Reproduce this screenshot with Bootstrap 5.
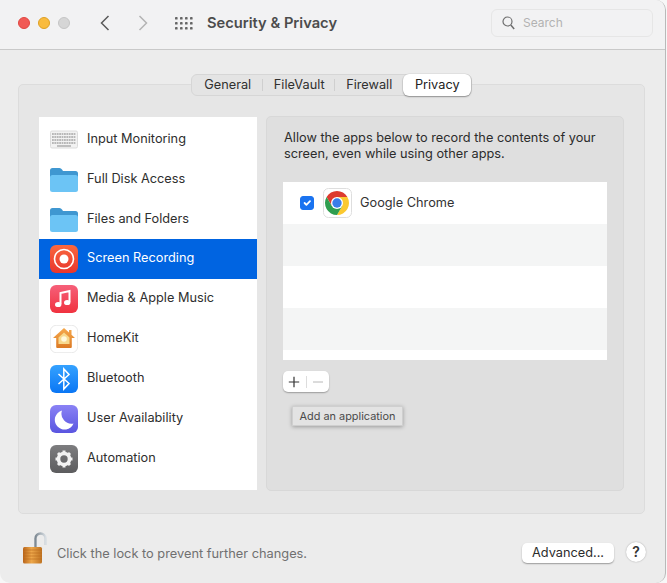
<!DOCTYPE html>
<html lang="en">
<head>
<meta charset="utf-8">
<title>Security &amp; Privacy</title>
<link href="https://cdn.jsdelivr.net/npm/bootstrap@5.3.0/dist/css/bootstrap.min.css" rel="stylesheet">
<style>
html,body{height:100%;background:#f7f7f7;overflow:hidden}
body{font-family:Inter,"Liberation Sans",sans-serif;font-size:12.75px;color:#2e2e2e;margin:0}
.win{width:666px;height:583px;background:#ececec;border-radius:0 10px 10px 10px;border-right:1px solid #b9b9b9;overflow:hidden;display:flex;flex-direction:column}
.tbar{height:50px;flex:none;background:#f2f2f3;border-bottom:1px solid #c9c9c9;padding:0 12px 3px 18px}
.light{width:12px;height:12px;border-radius:50%;display:block}
.lr{background:#f15a55;border:1px solid #e14640}.ly{background:#f9bb3e;border:1px solid #dfa023}.lg{background:#d6d6d6;border:1px solid #c5c5c5}
.lights{gap:8px;width:58px}
.nv1{margin-left:24px}.nv2{margin-left:28px}.nv3{margin-left:27px}
.wt{font-size:14.7px;font-weight:600;color:#4c4c4c;margin-left:14px}
.srch{width:162px;height:28px;border:1px solid #e6e6e6;border-radius:6px;background:#f2f2f3;padding-left:10px;color:#b2b2b2;font-size:12px;gap:8px}
.mainz{flex:1;padding:24px 20px 0 18px;position:relative}
.tabz{position:relative;z-index:2;margin-left:173px;width:281px;height:22px;background:#e4e4e4;border:1px solid #d6d6d6;border-radius:6px;margin-bottom:-12px;flex-wrap:nowrap}
.tabz .nav-link{height:20px;padding:0;font-size:12.75px;color:#303030;display:flex;align-items:center;justify-content:center;position:relative;border:0;background:transparent;border-radius:0}
.tabz .nav-link.t1{width:72px}.tabz .nav-link.t2{width:72px}.tabz .nav-link.t3{width:69px}
.tabz .nav-link.t1::after,.tabz .nav-link.t2::after{content:"";position:absolute;right:0;top:4px;height:12px;width:1px;background:#cfcfcf}
.tabz .nav-link.active{width:68px;height:22px;margin-top:-1px;background:#fff;color:#222;border-radius:6px;box-shadow:0 1px 1.5px rgba(0,0,0,.35),0 0 0 .5px rgba(0,0,0,.08)}
.pane{height:430px;background:#e6e6e6;border:1px solid #dcdcdc;border-radius:5px;padding:32px 21px 23px 20px;gap:9px}
.side{width:218px;height:373px;flex:none;background:#fff;padding:3px 0 10px;border:0;border-radius:0}
.side .list-group-item{height:40px;margin-top:0;border:0;padding:0 0 0 11px;display:flex;align-items:center;gap:9px;color:#2e2e2e;background:transparent;font-size:12.75px;border-radius:0}
.side .list-group-item.active{background:#0064e1;color:#fff}
.side .lbl{margin-bottom:2px}
.side svg{width:28px;height:28px;flex:none}
.rp{width:358px;height:375px;margin-top:-1px;background:#dfdfdf;border:1px solid #d8d8d8;border-radius:5px;padding:13px 16px 0 16px;position:relative}
.rp p{font-size:12.75px;line-height:16px;margin:0 0 20px 1px;color:#2c2c2c;white-space:nowrap}
.tblz{width:324px;height:178px;background:#fff}
.rw{height:42px}.rw.odd{background:#f4f5f5}
.rw .form-check-input{width:14px;height:14px;margin:0 9px 0 17px;background-color:#1a73f0;border-color:#1a73f0;border-radius:3px;flex:none;opacity:1}
.rw .nm{font-size:12.75px;margin-left:8px;color:#333}
.rw svg{flex:none}
.pm{width:46px;height:21px;margin-top:11px;background:#fff;border-radius:5px;box-shadow:0 1px 1.5px rgba(0,0,0,.3);padding:0}
.pm span{flex:1;text-align:center;display:flex;align-items:center;justify-content:center;height:100%}
.pm .sep{flex:none;width:1px;height:12px;background:#ddd}
.ttp{position:absolute;left:25px;top:289px;width:111px;height:20px;background:#e3e3e3;border:1px solid #cfcfcf;box-shadow:0 1px 4px rgba(0,0,0,.3);font-size:10.9px;color:#4a4a4a;display:flex;align-items:center;justify-content:center;white-space:nowrap}
.foot{height:69px;flex:none;padding:18px 19px 0 23px;position:relative}
.lk{color:#707070;font-size:12.8px;margin-left:9px;margin-top:12px}
.adv{width:92px;height:20px;padding:0;font-size:12.75px;color:#2c2c2c;background:#fff;border:0;border-radius:5px;box-shadow:0 1px 1.5px rgba(0,0,0,.35);margin-top:11px;margin-left:auto}
.hlp{width:20px;height:20px;padding:0;font-size:14px;font-weight:600;line-height:20px;color:#333;background:#fff;border:0;border-radius:50%;box-shadow:0 0 1.5px rgba(0,0,0,.35);margin-top:10px;margin-left:12px}
</style>
</head>
<body>
<div class="win">
  <header class="tbar d-flex align-items-center">
    <div class="lights d-flex"><i class="light lr"></i><i class="light ly"></i><i class="light lg"></i></div>
    <svg class="nv1" width="10" height="16" viewBox="0 0 10 16"><path d="M8.5 1 1.500 8l7 7" fill="none" stroke="#5a5a5a" stroke-width="1.500"/></svg>
    <svg class="nv2" width="10" height="16" viewBox="0 0 10 16"><path d="M1.500 1l7 7-7 7" fill="none" stroke="#b4b4b4" stroke-width="1.500"/></svg>
    <svg class="nv3" width="18" height="13" viewBox="0 0 18 13" fill="#666"><rect x="0" y="0" width="2.600" height="2.600" rx=".7"/><rect x="5" y="0" width="2.600" height="2.600" rx=".7"/><rect x="10" y="0" width="2.600" height="2.600" rx=".7"/><rect x="15" y="0" width="2.600" height="2.600" rx=".7"/><rect x="0" y="5" width="2.600" height="2.600" rx=".7"/><rect x="5" y="5" width="2.600" height="2.600" rx=".7"/><rect x="10" y="5" width="2.600" height="2.600" rx=".7"/><rect x="15" y="5" width="2.600" height="2.600" rx=".7"/><rect x="0" y="10" width="2.600" height="2.600" rx=".7"/><rect x="5" y="10" width="2.600" height="2.600" rx=".7"/><rect x="10" y="10" width="2.600" height="2.600" rx=".7"/><rect x="15" y="10" width="2.600" height="2.600" rx=".7"/></svg>
    <div class="wt">Security &amp; Privacy</div>
    <div class="srch d-flex align-items-center ms-auto">
      <svg width="13" height="14" viewBox="0 0 13 14"><circle cx="5.500" cy="5.500" r="4.500" fill="none" stroke="#6e6e6e" stroke-width="1.200"/><path d="M8.800 9l3.400 4" stroke="#6e6e6e" stroke-width="1.500"/></svg>
      <span>Search</span>
    </div>
  </header>
  <main class="mainz">
    <nav class="nav tabz">
      <a class="nav-link t1" href="#">General</a>
      <a class="nav-link t2" href="#">FileVault</a>
      <a class="nav-link t3" href="#">Firewall</a>
      <a class="nav-link active" href="#">Privacy</a>
    </nav>
    <div class="pane d-flex">
      <div class="list-group side">
        <div class="list-group-item">
          <svg viewBox="1 1 28 28"><rect x="1.500" y="6" width="27" height="17" rx="1.500" fill="#f2f2f2" stroke="#dcdcdc"/><path d="M3 9h24M3 12h24M3 15h24M3 18h24" stroke="#b8b8b8" stroke-width="2" stroke-dasharray="1.800 .6"/><path d="M8 21h14" stroke="#b8b8b8" stroke-width="1.800"/></svg>
          <span class="lbl">Input Monitoring</span>
        </div>
        <div class="list-group-item">
          <svg viewBox="1 1 28 28"><path d="M1 5.500Q1 3 3.500 3h7q1.500 0 2.500 1.500L14 6h12.500Q29 6 29 8.500V13H1z" fill="#3f97d1"/><rect x="1" y="10" width="28" height="17" rx="2.500" fill="#6cc4f5"/></svg>
          <span class="lbl">Full Disk Access</span>
        </div>
        <div class="list-group-item">
          <svg viewBox="1 1 28 28"><path d="M1 5.500Q1 3 3.500 3h7q1.500 0 2.500 1.500L14 6h12.500Q29 6 29 8.500V13H1z" fill="#3f97d1"/><rect x="1" y="10" width="28" height="17" rx="2.500" fill="#6cc4f5"/></svg>
          <span class="lbl">Files and Folders</span>
        </div>
        <div class="list-group-item active">
          <svg viewBox="1 1 28 28"><defs><linearGradient id="rd" x1="0" y1="0" x2="0" y2="1"><stop offset="0" stop-color="#f9683f"/><stop offset="1" stop-color="#e9352d"/></linearGradient></defs><rect x="1" y="1" width="28" height="28" rx="6" fill="url(#rd)"/><circle cx="15" cy="15" r="9.500" fill="none" stroke="#fff" stroke-width="1.600"/><circle cx="15" cy="15" r="4.500" fill="#fff"/></svg>
          <span class="lbl">Screen Recording</span>
        </div>
        <div class="list-group-item">
          <svg viewBox="1 1 28 28"><defs><linearGradient id="ms" x1="0" y1="0" x2="0" y2="1"><stop offset="0" stop-color="#f6607a"/><stop offset="1" stop-color="#f0323f"/></linearGradient></defs><rect x="1" y="1" width="28" height="28" rx="6" fill="url(#ms)"/><path d="M11.500 20V9l9-2v11" fill="none" stroke="#fff" stroke-width="2"/><ellipse cx="9.200" cy="20.500" rx="3.200" ry="2.600" fill="#fff"/><ellipse cx="18.200" cy="18.500" rx="3.200" ry="2.600" fill="#fff"/></svg>
          <span class="lbl">Media &amp; Apple Music</span>
        </div>
        <div class="list-group-item">
          <svg viewBox="1 1 28 28"><defs><linearGradient id="hm" x1="0" y1="0" x2="0" y2="1"><stop offset="0" stop-color="#f6a94c"/><stop offset="1" stop-color="#dc7a25"/></linearGradient></defs><rect x="1.300" y="1.300" width="27.400" height="27.400" rx="6" fill="#fff" stroke="#e0e0e0" stroke-width=".7"/><path d="M15 4 4 14h3.200v9a1 1 0 0 0 1 1h13.600a1 1 0 0 0 1-1v-9H26l-3.500-3.200V6H20v2.500z" fill="url(#hm)"/><path d="M15 8.500 9.500 13.500V20h11v-6.500z" fill="#f7d98e"/><circle cx="15" cy="15" r="2.800" fill="#fff8dc"/></svg>
          <span class="lbl">HomeKit</span>
        </div>
        <div class="list-group-item">
          <svg viewBox="1 1 28 28"><defs><linearGradient id="bt" x1="0" y1="0" x2="0" y2="1"><stop offset="0" stop-color="#35a2ff"/><stop offset="1" stop-color="#0a76f4"/></linearGradient></defs><rect x="1" y="1" width="28" height="28" rx="6" fill="url(#bt)"/><path d="M9.500 10 20 19.500 14.800 25V5L20 10.500 9.500 20" fill="none" stroke="#fff" stroke-width="1.500"/></svg>
          <span class="lbl">Bluetooth</span>
        </div>
        <div class="list-group-item">
          <svg viewBox="1 1 28 28"><defs><linearGradient id="un" x1="0" y1="0" x2="0" y2="1"><stop offset="0" stop-color="#8a82f5"/><stop offset="1" stop-color="#5a55e0"/></linearGradient></defs><rect x="1" y="1" width="28" height="28" rx="6" fill="url(#un)"/><path d="M13 6.500A9.700 9.700 0 1 0 24.500 19.500 10 10 0 0 1 13 6.500z" fill="#fff"/></svg>
          <span class="lbl">User Availability</span>
        </div>
        <div class="list-group-item">
          <svg viewBox="1 1 28 28"><defs><linearGradient id="au" x1="0" y1="0" x2="0" y2="1"><stop offset="0" stop-color="#7d7d7f"/><stop offset="1" stop-color="#5c5c5e"/></linearGradient></defs><rect x="1" y="1" width="28" height="28" rx="6" fill="url(#au)"/><circle cx="15" cy="15" r="5.500" fill="none" stroke="#f2f2f2" stroke-width="3.600"/><path d="M15 6.500v3M15 20.500v3M6.500 15h3M20.500 15h3M9 9l2 2M19 19l2 2M21 9l-2 2M11 19l-2 2" stroke="#f2f2f2" stroke-width="3"/></svg>
          <span class="lbl">Automation</span>
        </div>
      </div>
      <section class="rp">
        <p>Allow the apps below to record the contents of your<br>screen, even while using other apps.</p>
        <div class="tblz">
          <div class="rw d-flex align-items-center">
            <input class="form-check-input" type="checkbox" checked aria-label="Google Chrome">
            <svg width="29" height="30" viewBox="0 0 29 30"><rect x=".5" y=".5" width="28" height="29" rx="5" fill="#fff" stroke="#dedede"/><path d="M14 9H24.390A12 12 0 0 0 3.610 9L8.800 18z" fill="#dd3b2f"/><path d="M24.390 9A12 12 0 0 1 14 27L19.200 18 14 9z" fill="#fbc92f"/><path d="M14 27A12 12 0 0 1 3.610 9L8.800 18H19.200z" fill="#2f9e4f"/><circle cx="14" cy="15" r="6" fill="#fff"/><circle cx="14" cy="15" r="4.700" fill="#3a7de8"/></svg>
            <span class="nm">Google Chrome</span>
          </div>
          <div class="rw odd"></div>
          <div class="rw"></div>
          <div class="rw odd"></div>
        </div>
        <div class="pm d-flex align-items-center">
          <span><svg width="12" height="12" viewBox="0 0 12 12"><path d="M6 .8v10.400M.8 6h10.400" stroke="#333" stroke-width="1.200"/></svg></span>
          <span class="sep"></span>
          <span><svg width="12" height="12" viewBox="0 0 12 12"><path d="M1 6h10" stroke="#c4c4c4" stroke-width="1.200"/></svg></span>
        </div>
        <div class="ttp" role="tooltip">Add an application</div>
      </section>
    </div>
  </main>
  <footer class="foot d-flex align-items-start">
    <svg width="25" height="32" viewBox="0 0 25 32"><defs><linearGradient id="lkb" x1="0" y1="0" x2="1" y2="0"><stop offset="0" stop-color="#b9651b"/><stop offset=".45" stop-color="#eda74a"/><stop offset="1" stop-color="#bf7322"/></linearGradient><linearGradient id="lks" x1="0" y1="0" x2="1" y2="0"><stop offset="0" stop-color="#7e8a94"/><stop offset="1" stop-color="#d7dde2"/></linearGradient></defs><path d="M12.500 15V6.500a5 5 0 0 1 10 0V13" fill="none" stroke="url(#lks)" stroke-width="2.400"/><rect x="0" y="15" width="19" height="16.500" rx="1.500" fill="url(#lkb)"/><path d="M0 18h19M0 21h19M0 24h19M0 27h19" stroke="#b96a1c" stroke-width=".6"/></svg>
    <span class="lk">Click the lock to prevent further changes.</span>
    <button class="btn adv" type="button">Advanced...</button>
    <button class="btn hlp" type="button">?</button>
  </footer>
</div>
<script src="https://cdn.jsdelivr.net/npm/bootstrap@5.3.0/dist/js/bootstrap.bundle.min.js"></script>
</body>
</html>
